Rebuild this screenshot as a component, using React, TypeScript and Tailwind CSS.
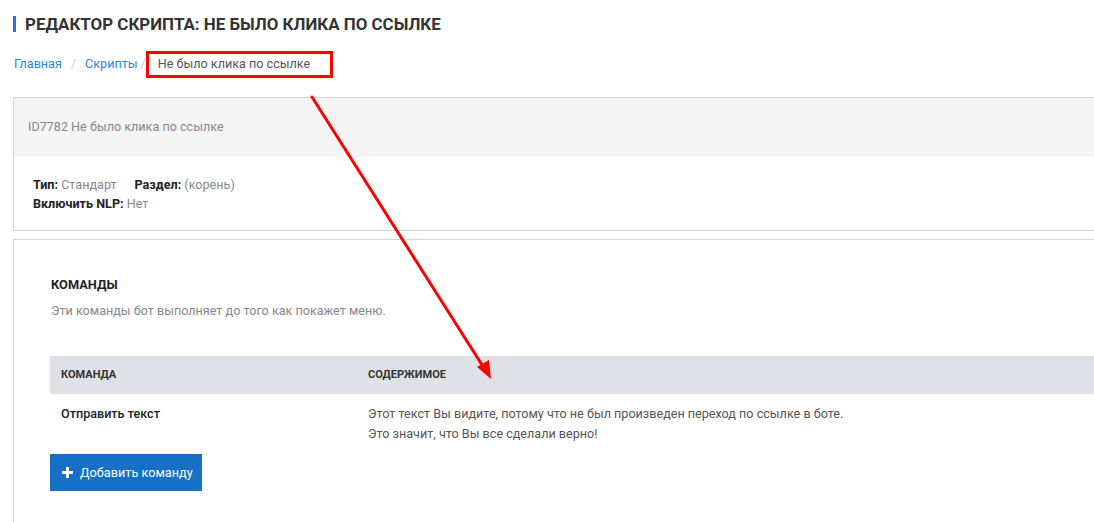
import React from "react";

export default function App() {
  return (
    <div className="relative w-[1094px] h-[522px] overflow-hidden bg-white font-['Roboto',sans-serif] text-[12.6px] text-[#333]">
      <div className="pl-[13px]">
        {/* Title */}
        <div className="flex items-center h-[16px] mt-[16px] border-l-[3px] border-[#4466dd] pl-[9px]">
          <h1 className="text-[16.9px] font-bold uppercase leading-none text-[#333]">
            Редактор скрипта: Не было клика по ссылке
          </h1>
        </div>

        {/* Breadcrumb */}
        <div className="flex items-center h-[27px] mt-[19px] pl-[1px]">
          <span className="text-[#2a86de]">Главная</span>
          <span className="text-[#ccc] px-[9px]">/</span>
          <span className="text-[#2a86de]">Скрипты</span>
          <span className="text-[#ccc] pl-[3px]">/</span>
          <span className="flex items-center h-[27px] border-[3px] border-[#f00] pl-[9px] text-[#555] w-[187px]">
            Не было клика по ссылке
          </span>
        </div>

        {/* Panel 1 */}
        <div className="mt-[19px] -mr-[20px] border border-[#d2d6de]">
          <div className="bg-[#f5f5f5] h-[59px] flex items-center pl-[14px] text-[#888]">
            ID7782 Не было клика по ссылке
          </div>
          <div className="pt-[18px] pb-[17px] pl-[19px] leading-[19px]">
            <div>
              <b className="font-bold text-[#222]">Тип:</b>{" "}
              <span className="text-[#888]">Стандарт</span>
              <b className="font-bold text-[#222] ml-[18px]">Раздел:</b>{" "}
              <span className="text-[#888]">(корень)</span>
            </div>
            <div>
              <b className="font-bold text-[#222]">Включить NLP:</b>{" "}
              <span className="text-[#888]">Нет</span>
            </div>
          </div>
        </div>

        {/* Panel 2 */}
        <div className="mt-[8px] -mr-[20px] border border-[#d2d6de] h-[300px] pl-[36px] pt-[35px]">
          <div className="text-[12.8px] font-bold uppercase text-[#222] leading-[19px] pl-[1px]">Команды</div>
          <div className="text-[#888] mt-[7px] leading-[19px] pl-[1px]">
            Эти команды бот выполняет до того как покажет меню.
          </div>
          <div className="mt-[36px]">
            <div className="flex items-center h-[38px] bg-[#dee1e5] text-[11px] font-bold uppercase text-[#333]">
              <div className="w-[307px] pl-[11px]">Команда</div>
              <div className="pl-[11px]">Содержимое</div>
            </div>
            <div className="flex pt-[10px] leading-[20px]">
              <div className="w-[307px] pl-[11px] font-medium text-[#222]">Отправить текст</div>
              <div className="pl-[11px] text-[#555]">
                <div>Этот текст Вы видите, потому что не был произведен переход по ссылке в боте.</div>
                <div>Это значит, что Вы все сделали верно!</div>
              </div>
            </div>
            <button className="mt-[10px] flex items-center h-[37px] w-[152px] whitespace-nowrap bg-[#1570c6] text-white text-[12.7px] pl-[12px]">
              <svg width="11" height="11" viewBox="0 0 11 11" className="mr-[7px]">
                <path d="M4 0h3v4h4v3H7v4H4V7H0V4h4z" fill="white" />
              </svg>
              Добавить команду
            </button>
          </div>
        </div>
      </div>

      {/* Red arrow annotation */}
      <svg className="absolute left-0 top-0 pointer-events-none" width="1094" height="522">
        <line x1="312" y1="97" x2="484" y2="368" stroke="#ff0000" strokeWidth="3" strokeLinecap="round" />
        <polygon points="491,379 477,367 489,360" fill="#ff0000" />
      </svg>
    </div>
  );
}
